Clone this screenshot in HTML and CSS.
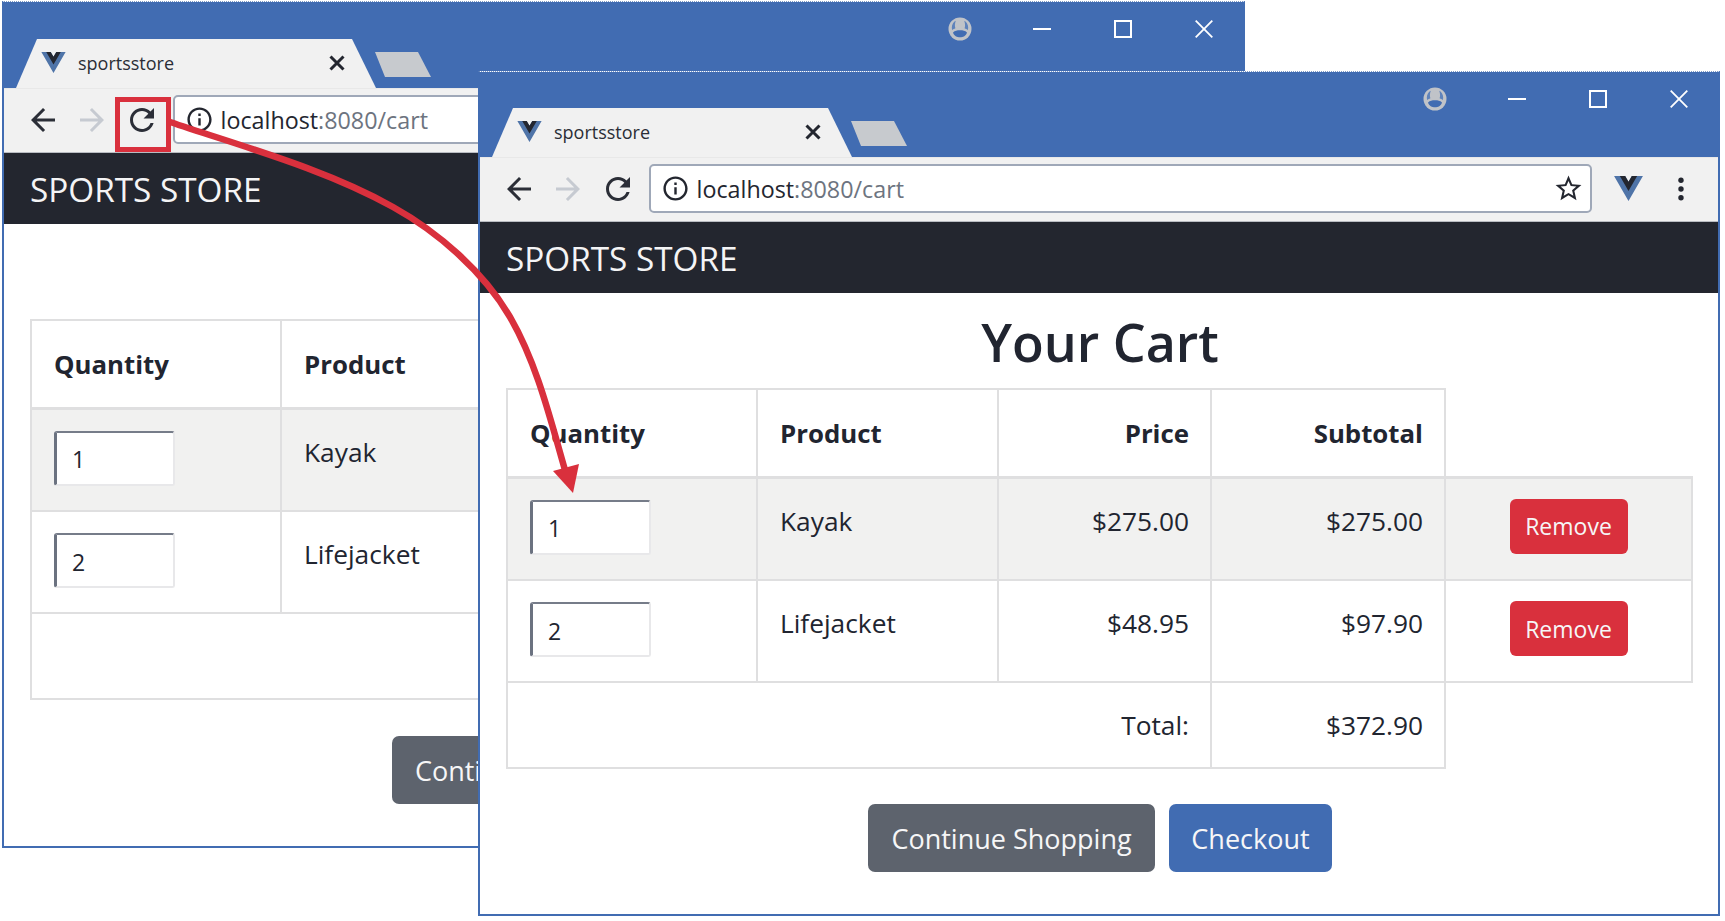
FILE: index.html
```html
<!DOCTYPE html>
<html lang="en">
<head>
<meta charset="utf-8">
<title>sportsstore</title>
<link rel="stylesheet" href="styles.css">
</head>
<body>
<svg class="defs" width="0" height="0" aria-hidden="true">
  <symbol id="i-vue" viewBox="0 0 261.76 226.69">
    <path fill="#4f74a8" d="M161.096.001l-30.225 52.351L100.647.001H-.005l130.877 226.688L261.749.001z"/>
    <path fill="#23262f" d="M161.096.001l-30.225 52.351L100.647.001H52.346l78.526 136.01L209.398.001z"/>
  </symbol>
  <symbol id="i-back" viewBox="0 0 24 24"><path d="M20 11H7.83l5.59-5.59L12 4l-8 8 8 8 1.41-1.41L7.83 13H20v-2z"/></symbol>
  <symbol id="i-forward" viewBox="0 0 24 24"><path d="M4 11h12.17l-5.59-5.59L12 4l8 8-8 8-1.41-1.41L16.17 13H4v-2z"/></symbol>
  <symbol id="i-reload" viewBox="0 0 24 24"><path d="M17.65 6.35C16.2 4.9 14.21 4 12 4c-4.42 0-7.99 3.58-7.99 8s3.57 8 7.99 8c3.73 0 6.84-2.55 7.73-6h-2.08c-.82 2.33-3.04 4-5.65 4-3.31 0-6-2.69-6-6s2.69-6 6-6c1.66 0 3.14.69 4.22 1.78L13 11h7V4l-2.35 2.35z"/></symbol>
  <symbol id="i-info" viewBox="0 0 24 24"><path d="M11 7h2v2h-2zm0 4h2v6h-2zm1-9C6.48 2 2 6.48 2 12s4.48 10 10 10 10-4.48 10-10S17.52 2 12 2zm0 18c-4.41 0-8-3.59-8-8s3.59-8 8-8 8 3.59 8 8-3.59 8-8 8z"/></symbol>
  <symbol id="i-star" viewBox="0 0 24 24"><path d="M22 9.24l-7.19-.62L12 2 9.19 8.63 2 9.24l5.46 4.73L5.82 21 12 17.27 18.18 21l-1.63-7.03L22 9.24zM12 15.4l-3.76 2.27 1-4.28-3.32-2.88 4.38-.38L12 6.1l1.71 4.04 4.38.38-3.32 2.88 1 4.28L12 15.4z"/></symbol>
  <symbol id="i-dots" viewBox="0 0 6 24"><circle cx="3" cy="3.2" r="2.7"/><circle cx="3" cy="12" r="2.7"/><circle cx="3" cy="20.8" r="2.7"/></symbol>
  <symbol id="i-user" viewBox="0 0 24 24">
    <circle cx="12" cy="12" r="11.5" fill="#c0c3c8"/>
    <path fill="#416cb2" d="M5 15.500C7 13.600 9 13.300 12 13.300s5 .3 7 2.200C18 19.200 15 20.200 12 20.200s-6-1-7-4.700z"/>
    <path fill="#5f83bb" d="M3.800 11C3.800 7.500 5.500 4.800 7.800 3.800 6.800 6.500 6.600 9 7.400 11.300 6.300 11.800 5 12.400 4.300 13.200zM20.200 11C20.200 7.500 18.500 4.800 16.200 3.800 17.200 6.500 17.400 9 16.600 11.300 17.700 11.800 19 12.400 19.700 13.200z"/>
  </symbol>
  <symbol id="i-min" viewBox="0 0 18 18"><path d="M0 9h18" stroke="#fff" stroke-width="2" fill="none"/></symbol>
  <symbol id="i-max" viewBox="0 0 18 18"><rect x="1" y="1" width="16" height="16" stroke="#fff" stroke-width="2" fill="none"/></symbol>
  <symbol id="i-close" viewBox="0 0 18 18"><path d="M.7.7l16.600 16.600M17.300.7L.7 17.300" stroke="#fff" stroke-width="1.800" fill="none"/></symbol>
  <symbol id="i-tabx" viewBox="0 0 16 16"><path d="M1.500 1.500l13 13M14.500 1.500l-13 13" stroke="#23262f" stroke-width="3" fill="none"/></symbol>
</svg>

<section class="win win-back">
  <header class="titlebar">
    <div class="tabstrip">
      <div class="tab">
        <svg class="favicon"><use href="#i-vue"/></svg>
        <span class="tab-title">sportsstore</span>
        <svg class="tab-x"><use href="#i-tabx"/></svg>
      </div>
      <div class="newtab"></div>
    </div>
    <div class="controls">
      <span class="ctl"><svg class="ic-user"><use href="#i-user"/></svg></span>
      <span class="ctl"><svg class="ic-ctl"><use href="#i-min"/></svg></span>
      <span class="ctl"><svg class="ic-ctl"><use href="#i-max"/></svg></span>
      <span class="ctl"><svg class="ic-ctl"><use href="#i-close"/></svg></span>
    </div>
  </header>
  <div class="toolbar">
    <span class="nav-btn"><svg class="ic-nav"><use href="#i-back"/></svg></span>
    <span class="nav-btn"><svg class="ic-nav ic-off"><use href="#i-forward"/></svg></span>
    <span class="nav-btn"><svg class="ic-nav"><use href="#i-reload"/></svg></span>
    <div class="omnibox">
      <svg class="ic-info"><use href="#i-info"/></svg>
      <span class="url">localhost<span class="url-dim">:8080/cart</span></span>
    </div>
  </div>
  <div class="brandbar">SPORTS STORE</div>
  <main class="page">
    <div class="page-title"></div>
    <table class="cart">
      <colgroup><col class="c1"><col class="c2"><col class="c3"><col class="c4"><col class="c5"></colgroup>
      <thead>
        <tr><th>Quantity</th><th>Product</th><th></th><th></th><th class="blank"></th></tr>
      </thead>
      <tbody>
        <tr class="stripe"><td><input class="qty" type="text" value="1"></td><td>Kayak</td><td></td><td></td><td></td></tr>
        <tr class="row2"><td><input class="qty" type="text" value="2"></td><td>Lifejacket</td><td></td><td></td><td></td></tr>
      </tbody>
      <tfoot>
        <tr><td class="total" colspan="3"></td><td class="total"></td><td class="blank"></td></tr>
      </tfoot>
    </table>
    <div class="actions">
      <button class="btn btn-big btn-grey">Continue Shopping</button>
      <span class="btn-big btn-blue"></span>
    </div>
  </main>
</section>

<section class="win win-front">
  <header class="titlebar">
    <div class="tabstrip">
      <div class="tab">
        <svg class="favicon"><use href="#i-vue"/></svg>
        <span class="tab-title">sportsstore</span>
        <svg class="tab-x"><use href="#i-tabx"/></svg>
      </div>
      <div class="newtab"></div>
    </div>
    <div class="controls">
      <span class="ctl"><svg class="ic-user"><use href="#i-user"/></svg></span>
      <span class="ctl"><svg class="ic-ctl"><use href="#i-min"/></svg></span>
      <span class="ctl"><svg class="ic-ctl"><use href="#i-max"/></svg></span>
      <span class="ctl"><svg class="ic-ctl"><use href="#i-close"/></svg></span>
    </div>
  </header>
  <div class="toolbar">
    <span class="nav-btn"><svg class="ic-nav"><use href="#i-back"/></svg></span>
    <span class="nav-btn"><svg class="ic-nav ic-off"><use href="#i-forward"/></svg></span>
    <span class="nav-btn"><svg class="ic-nav"><use href="#i-reload"/></svg></span>
    <div class="omnibox">
      <svg class="ic-info"><use href="#i-info"/></svg>
      <span class="url">localhost<span class="url-dim">:8080/cart</span></span>
      <svg class="ic-star"><use href="#i-star"/></svg>
    </div>
    <svg class="ic-ext"><use href="#i-vue"/></svg>
    <svg class="ic-dots"><use href="#i-dots"/></svg>
  </div>
  <div class="brandbar">SPORTS STORE</div>
  <main class="page">
    <h1 class="page-title">Your Cart</h1>
    <table class="cart">
      <colgroup><col class="c1"><col class="c2"><col class="c3"><col class="c4"><col class="c5"></colgroup>
      <thead>
        <tr><th>Quantity</th><th>Product</th><th class="num">Price</th><th class="num">Subtotal</th><th class="blank"></th></tr>
      </thead>
      <tbody>
        <tr class="stripe"><td><input class="qty" type="text" value="1"></td><td>Kayak</td><td class="num">$275.00</td><td class="num">$275.00</td><td class="act"><button class="btn btn-remove">Remove</button></td></tr>
        <tr class="row2"><td><input class="qty" type="text" value="2"></td><td>Lifejacket</td><td class="num">$48.95</td><td class="num">$97.90</td><td class="act"><button class="btn btn-remove">Remove</button></td></tr>
      </tbody>
      <tfoot>
        <tr><td class="num total" colspan="3">Total:</td><td class="num total">$372.90</td><td class="blank"></td></tr>
      </tfoot>
    </table>
    <div class="actions">
      <button class="btn btn-big btn-grey">Continue Shopping</button>
      <button class="btn btn-big btn-blue">Checkout</button>
    </div>
  </main>
</section>

<svg class="callout" width="1725" height="921" viewBox="0 0 1725 921" aria-hidden="true">
  <rect x="117.500" y="99.500" width="51" height="50" fill="none" stroke="#d9303d" stroke-width="5"/>
  <path d="M170 122C244 147 325 169 393 207C438 232 484 272 510 317C537 364 550 418 565 470" fill="none" stroke="#d9303d" stroke-width="6.500"/>
  <polygon points="553,471 579,464 573,493" fill="#d9303d"/>
</svg>
</body>
</html>
```

FILE: styles.css
```css
* { box-sizing: border-box; }

html, body {
  margin: 0;
  padding: 0;
}

body {
  position: relative;
  width: 1725px;
  height: 921px;
  overflow: hidden;
  background: #fff;
  color: #212530;
  font-family: "Open Sans", "Noto Sans", sans-serif;
}

.defs { position: absolute; }

.win {
  position: absolute;
  display: flex;
  flex-direction: column;
  overflow: hidden;
  background: #fff;
  border: 2px solid #416cb2;
  border-top: 1px dotted #7f9bc8;
}

.win-back { left: 2px; top: 1px; width: 1243px; height: 847px; }
.win-front { left: 478px; top: 71px; width: 1242px; height: 845px; }

.titlebar {
  flex: none;
  height: 85px;
  display: flex;
  justify-content: space-between;
  background: #416cb2;
}

.win-back .titlebar { height: 86px; }
.win-back .page-title { height: 95px; }
.win-back .actions { margin: 36px 0 0 -2px; }

.tabstrip {
  display: flex;
  align-items: flex-end;
  padding-left: 12px;
}

.tab {
  width: 360px;
  height: 49px;
  display: flex;
  align-items: center;
  padding: 0 31px 2px 25px;
  background: #f1f1f1;
  clip-path: polygon(0 100%, 21px 0, 336px 0, 360px 100%);
}

.favicon { flex: none; width: 25px; height: 21px; }

.tab-title {
  flex: 1;
  margin-left: 12px;
  font-size: 18px;
  color: #2a2d36;
}

.tab-x { flex: none; width: 16px; height: 16px; }

.newtab {
  width: 56px;
  height: 25px;
  margin: 0 0 11px -1px;
  background: #c7cace;
  clip-path: polygon(0 0, 43px 0, 56px 100%, 10px 100%);
}

.controls {
  display: flex;
  height: 54px;
  margin-right: -1px;
}

.ctl {
  width: 81px;
  display: flex;
  align-items: center;
  justify-content: center;
}

.ic-user { width: 24px; height: 24px; margin-left: -2px; }
.ic-ctl { width: 18px; height: 18px; }

.toolbar {
  flex: none;
  height: 65px;
  display: flex;
  align-items: center;
  padding: 0 34px 2px 14px;
  background: #f1f1f1;
  border-top: 1px solid #e8e8e8;
  border-bottom: 1px solid #b9bcc2;
}

.nav-btn {
  width: 49.500px;
  display: flex;
  justify-content: center;
}

.ic-nav { width: 36px; height: 36px; fill: #2b2e37; }
.ic-off { fill: #c6cad1; }

.omnibox {
  flex: 1;
  height: 49px;
  margin-left: 6px;
  display: flex;
  align-items: center;
  padding: 0 6px 0 10px;
  background: #fff;
  border: 2px solid #9fa8b8;
  border-radius: 5px;
}

.ic-info { flex: none; width: 29px; height: 29px; fill: #23262f; }

.url {
  flex: 1;
  margin-left: 7px;
  font-size: 23.300px;
  color: #23262f;
}

.url-dim { color: #6d7480; }

.ic-star { flex: none; width: 31px; height: 31px; fill: #23262f; }

.ic-ext { flex: none; width: 29px; height: 25px; margin-left: 22px; }

.ic-dots { flex: none; width: 6px; height: 24px; margin-left: 35px; fill: #23262f; }

.brandbar {
  flex: none;
  height: 71px;
  display: flex;
  align-items: center;
  padding-left: 26px;
  background: #23262f;
  color: #f4f4f5;
  font-size: 33.300px;
}

.page {
  flex: 1;
  padding: 0 24px 0 26px;
}

.page-title {
  height: 95px;
  margin: 0;
  padding-top: 1px;
  display: flex;
  align-items: center;
  justify-content: center;
  font-size: 52px;
  font-weight: 600;
  color: #212530;
}

.cart {
  width: 1185px;
  table-layout: fixed;
  border-collapse: collapse;
  font-size: 26.300px;
}

.c1 { width: 250px; }
.c2 { width: 241px; }
.c3 { width: 213px; }
.c4 { width: 234px; }
.c5 { width: 247px; }

.cart th,
.cart td {
  padding: 21px 21px 21px 22px;
  border: 2px solid #dfdfe0;
  text-align: left;
  vertical-align: top;
  line-height: 42px;
}

.cart th {
  height: 88px;
  font-size: 25.800px;
  font-weight: 700;
  border-bottom-width: 3px;
  vertical-align: middle;
  padding-top: 0;
  padding-bottom: 0;
}

.cart .num { text-align: right; }

.cart .blank {
  border: 0;
}

.cart thead .blank { border-bottom: 3px solid #dfdfe0; }

.stripe td { height: 103px; background: #f1f1f0; }
.row2 td { height: 102px; }

.cart .total {
  height: 86px;
  padding-top: 0;
  padding-bottom: 0;
  vertical-align: middle;
}

.cart .act {
  text-align: center;
  padding-right: 22px;
}

.qty {
  display: block;
  width: 121px;
  height: 55px;
  padding: 2px 0 0 15px;
  font: 23px "Open Sans", "Noto Sans", sans-serif;
  color: #212530;
  background: #fff;
  border: 2px solid #e8e8ea;
  border-top-color: #767c89;
  border-left: 3px solid #6b7280;
  border-radius: 3px;
}

.btn {
  border: 0;
  color: #f6f6f7;
  font-family: "Open Sans", "Noto Sans", sans-serif;
}

.btn-remove {
  display: block;
  width: 118px;
  height: 55px;
  margin: -1px auto 0;
  padding: 0;
  font-size: 23px;
  background: #d9303d;
  border-radius: 6px;
}

.actions {
  display: flex;
  justify-content: center;
  gap: 14px;
  margin-top: 35px;
}

.btn-big {
  height: 68px;
  font-size: 27px;
  border-radius: 7px;
}

.btn-grey { width: 287px; background: #5d636d; }
.btn-blue { width: 163px; background: #416cb2; }

.callout {
  position: absolute;
  left: 0;
  top: 0;
  pointer-events: none;
}
```
